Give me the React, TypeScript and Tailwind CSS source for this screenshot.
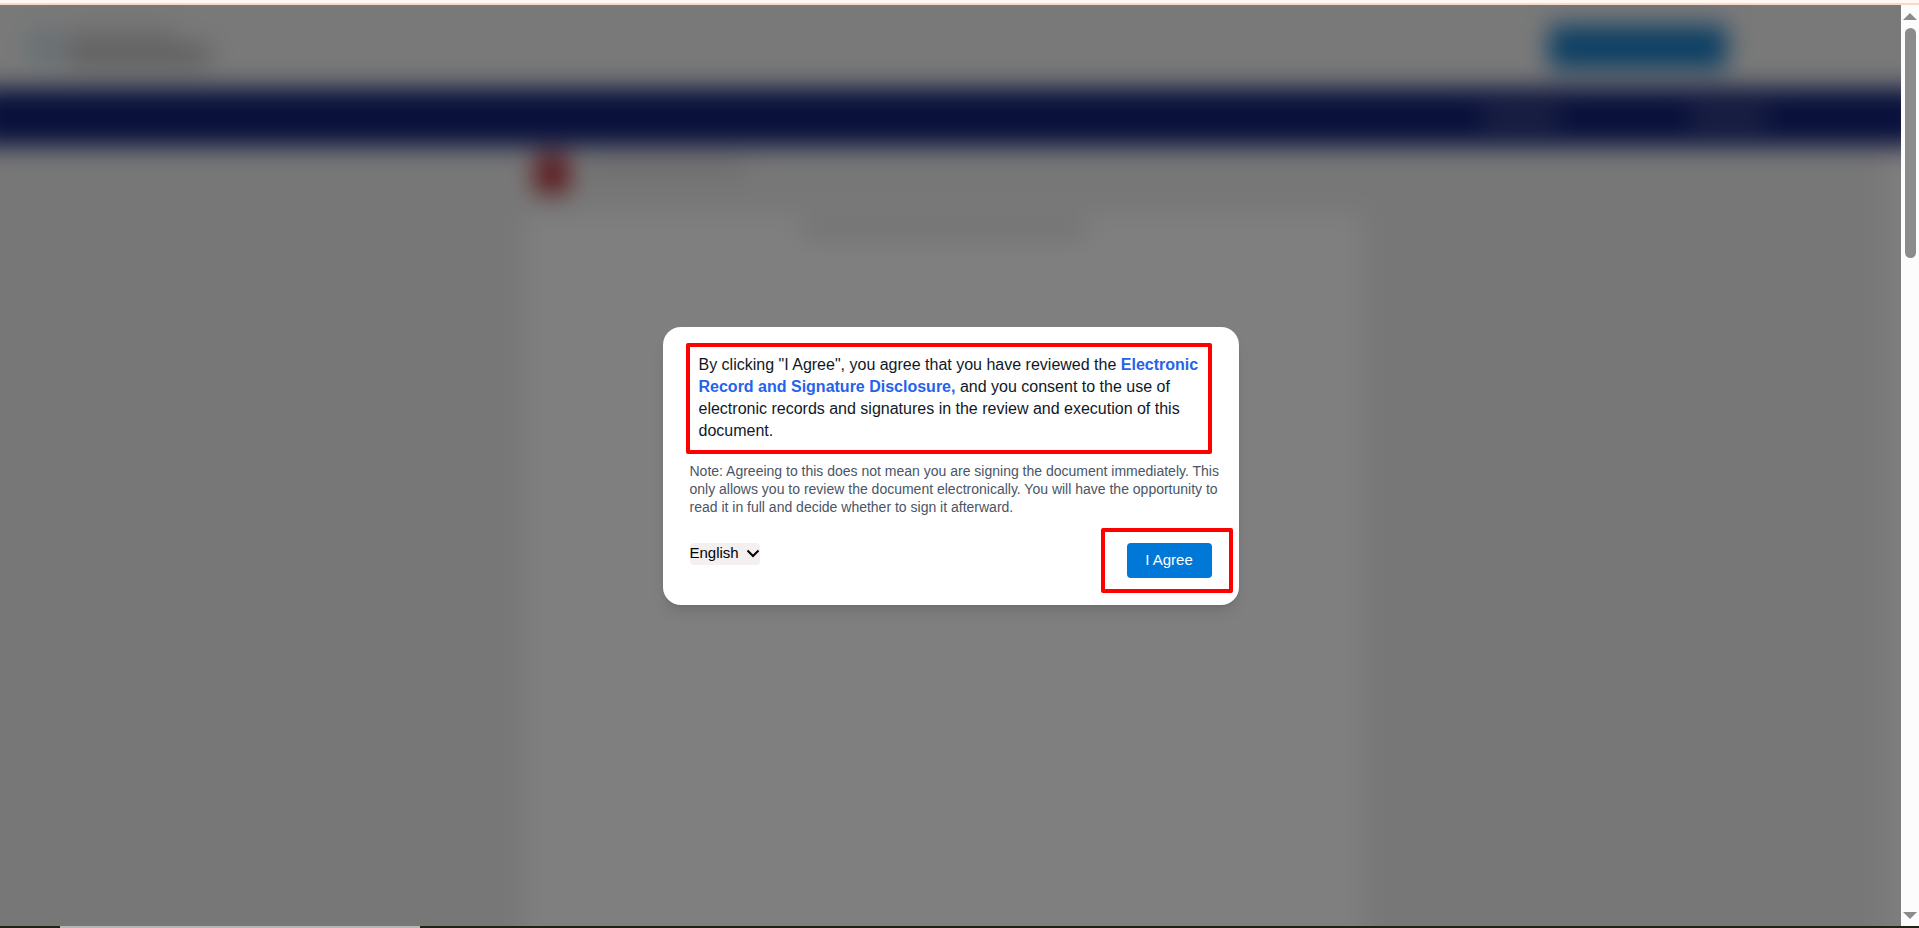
import { useState } from "react";

const LANGUAGES = ["English", "Español", "Français"];

// Bleeds 24px past every edge so the blur does not fade at the window border
function DocumentPage() {
  return (
    <div
      className="absolute -inset-6 flex flex-col bg-[#efefef] blur-md"
      aria-hidden="true"
    >
      <header className="flex h-[107px] shrink-0 items-center justify-between bg-[#f2f2f2] pt-6 pr-[198px] pl-[52px]">
        <div className="flex items-center gap-1">
          <div className="h-9 w-8 rounded-full bg-[#c8e0e6]" />
          <div className="flex flex-col gap-1">
            <div className="h-3 w-28 rounded-full bg-[#d0d0d3]" />
            <div className="h-5 w-[148px] rounded-full bg-[#b9babd]" />
          </div>
        </div>
        <div className="h-11 w-[178px] rounded bg-[#1c80c8]" />
      </header>
      <nav className="flex h-[58px] shrink-0 items-center justify-end gap-32 bg-[#122278] pr-[156px]">
        <div className="h-3 w-20 rounded-full bg-[#5a6090]" />
        <div className="h-3 w-20 rounded-full bg-[#5a6090]" />
      </nav>
      <div className="flex min-h-0 flex-1">
        <main className="flex flex-1 flex-col items-center pl-[26px]">
          <div className="flex h-[68px] w-[836px] shrink-0 items-start gap-4 px-2 pt-2">
            <div className="h-10 w-9 rounded-xl bg-[#b8343c]" />
            <div className="mt-2 h-3 w-40 rounded-full bg-[#d4d4d4]" />
          </div>
          <div className="flex w-[836px] flex-1 justify-center bg-white pt-2">
            <div className="h-4 w-[288px] rounded-full bg-[#e2e2e2]" />
          </div>
        </main>
        <div className="w-10 bg-[#fcfcfc]" />
      </div>
    </div>
  );
}

function ConsentDialog() {
  const [language, setLanguage] = useState("English");

  return (
    <div
      role="dialog"
      aria-modal="true"
      aria-label="Electronic records consent"
      className="w-full max-w-xl rounded-[18px] bg-white p-[27px] shadow-lg"
    >
      <div className="relative px-[9px]">
        <p className="text-base leading-[22px] text-gray-900">
          By clicking "I Agree", you agree that you have reviewed the{" "}
          <a href="#disclosure" className="font-bold text-[#2563eb]">
            Electronic Record and Signature Disclosure,
          </a>{" "}
          and you consent to the use of electronic records and signatures in
          the review and execution of this document.
        </p>
        <div className="pointer-events-none absolute -top-[11px] right-0 -bottom-3 -left-1 rounded-xs border-4 border-[#ff0000]" />
      </div>
      <p className="mt-5 -mr-3 text-sm leading-[18px] text-gray-600">
        Note: Agreeing to this does not mean you are signing the document
        immediately. This only allows you to review the document
        electronically. You will have the opportunity to read it in full and
        decide whether to sign it afterward.
      </p>
      <div className="mt-[27px] flex items-start justify-between">
        <div className="relative flex">
          <select
            aria-label="Language"
            value={language}
            onChange={(e) => setLanguage(e.target.value)}
            className="h-[22px] w-[70px] appearance-none rounded bg-[#f4f0f0] pb-[2px] text-[15px] leading-5 text-black"
          >
            {LANGUAGES.map((item) => (
              <option key={item}>{item}</option>
            ))}
          </select>
          <svg
            width="14"
            height="10"
            viewBox="0 0 14 10"
            fill="none"
            className="pointer-events-none absolute top-[6px] right-0"
          >
            <path d="M1.5 1.5L7 7L12.5 1.5" stroke="black" strokeWidth="2" />
          </svg>
        </div>
        <div className="relative">
          <button className="h-[35px] w-[85px] rounded bg-[#0078d7] text-[15px] text-white">
            I Agree
          </button>
          <div className="pointer-events-none absolute -top-[15px] -right-[21px] -bottom-[15px] -left-[26px] rounded-xs border-4 border-[#ff0000]" />
        </div>
      </div>
    </div>
  );
}

function Scrollbar() {
  return (
    <div className="flex w-[18px] shrink-0 flex-col items-center bg-[#fcfcfc] pt-2 pb-[7px]">
      <svg width="14" height="7" viewBox="0 0 14 7" fill="#8b8b8b">
        <path d="M7 0L14 7H0Z" />
      </svg>
      <div className="mt-2 h-[230px] w-[11px] rounded-full bg-[#8b8b8b]" />
      <svg
        width="14"
        height="7"
        viewBox="0 0 14 7"
        fill="#8b8b8b"
        className="mt-auto"
      >
        <path d="M0 0H14L7 7Z" />
      </svg>
    </div>
  );
}

export default function App() {
  return (
    <div className="flex h-screen flex-col overflow-hidden font-['Liberation_Sans',Arial,sans-serif]">
      <div className="h-[5px] shrink-0 border-b-2 border-[#f4d9cb] bg-[#fff7f0]" />
      <div className="flex min-h-0 flex-1">
        <div className="relative min-w-0 flex-1 overflow-hidden">
          <DocumentPage />
          <div className="absolute inset-0 flex items-center justify-center bg-black/50 pt-px">
            <ConsentDialog />
          </div>
        </div>
        <Scrollbar />
      </div>
      <div className="flex h-[2px] shrink-0 bg-[#1c2416] pl-[60px]">
        <div className="w-[360px] bg-[#b5b5b5]" />
      </div>
    </div>
  );
}
